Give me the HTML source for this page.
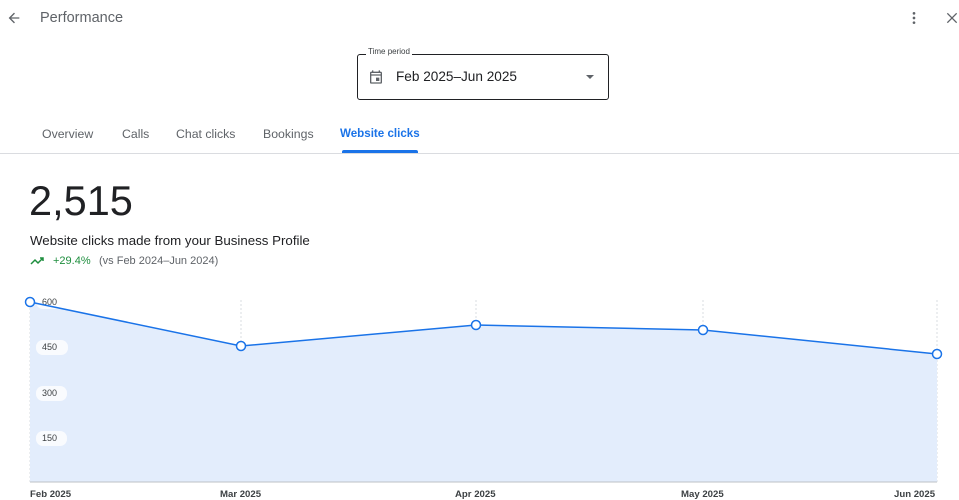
<!DOCTYPE html>
<html><head><meta charset="utf-8"><style>
body{margin:0;width:959px;height:500px;overflow:hidden;background:#fff;font-family:"Liberation Sans",sans-serif;position:relative;color:#202124}
.a{position:absolute;white-space:nowrap}
.tab{position:absolute;top:127px;font-size:12.3px;color:#5f6368}
</style></head><body>
<svg class="a" style="left:6px;top:10px" width="16" height="16" viewBox="0 0 24 24"><path d="M20 11H7.8l5.6-5.6L12 4l-8 8 8 8 1.4-1.4L7.8 13H20z" fill="#5f6368"/></svg>
<div class="a" style="left:40px;top:10px;font-size:14.5px;color:#5f6368">Performance</div>
<svg class="a" style="left:906px;top:10px" width="16" height="16" viewBox="0 0 24 24"><circle cx="12" cy="5" r="2" fill="#5f6368"/><circle cx="12" cy="12" r="2" fill="#5f6368"/><circle cx="12" cy="19" r="2" fill="#5f6368"/></svg>
<svg class="a" style="left:944px;top:10px" width="16" height="16" viewBox="0 0 24 24"><path d="M5 5L19 19M19 5L5 19" stroke="#5f6368" stroke-width="2"/></svg>
<div class="a" style="left:357px;top:54px;width:250px;height:44px;border:1.5px solid #202124;border-radius:3px"></div>
<div class="a" style="left:366px;top:47px;background:#fff;padding:0 2px;font-size:8px;color:#3c4043">Time period</div>
<svg class="a" style="left:368px;top:69px" width="16" height="16" viewBox="0 0 24 24"><path d="M19 4h-1V2h-2v2H8V2H6v2H5a2 2 0 0 0-2 2v14a2 2 0 0 0 2 2h14a2 2 0 0 0 2-2V6a2 2 0 0 0-2-2zm0 16H5V10h14zm0-12H5V6h14z M12 13h5v5h-5z" fill="#5f6368"/></svg>
<div class="a" style="left:396px;top:69px;font-size:13.6px">Feb 2025–Jun 2025</div>
<div class="a" style="left:586px;top:75px;width:0;height:0;border-left:4px solid transparent;border-right:4px solid transparent;border-top:4px solid #5f6368"></div>
<div class="tab" style="left:42px">Overview</div>
<div class="tab" style="left:122px">Calls</div>
<div class="tab" style="left:176px">Chat clicks</div>
<div class="tab" style="left:263px">Bookings</div>
<div class="tab" style="left:340px;color:#1a73e8;font-weight:bold;font-size:11.6px">Website clicks</div>
<div class="a" style="left:342px;top:150px;width:76px;height:3px;background:#1a73e8;border-radius:2px 2px 0 0"></div>
<div class="a" style="left:0;top:153px;width:959px;height:1px;background:#dadce0"></div>
<div class="a" style="left:29px;top:177px;font-size:41.5px">2,515</div>
<div class="a" style="left:30px;top:233px;font-size:13.3px">Website clicks made from your Business Profile</div>
<svg class="a" style="left:30px;top:256px" width="14" height="10" viewBox="0 0 14 10"><path d="M1 8l4-4 3 3 5-5M10 2h3v3" stroke="#1e8e3e" stroke-width="1.5" fill="none"/></svg>
<div class="a" style="left:53px;top:255px;font-size:11px;color:#1e8e3e">+29.4%</div>
<div class="a" style="left:99px;top:255px;font-size:11px;color:#5f6368">(vs Feb 2024–Jun 2024)</div>
<svg class="a" style="left:0;top:0" width="959" height="500">
<g stroke="#dadce0" stroke-dasharray="2,2"><line x1="30" y1="300" x2="30" y2="482"/><line x1="241" y1="300" x2="241" y2="482"/><line x1="476" y1="300" x2="476" y2="482"/><line x1="703" y1="300" x2="703" y2="482"/><line x1="937" y1="300" x2="937" y2="482"/></g>
<path d="M30 302L241 346L476 325L703 330L937 354L937 482L30 482Z" fill="#e3edfc"/>
<line x1="30" y1="482" x2="937" y2="482" stroke="#bdc1c6"/>
<g fill="#fff" opacity=".8"><rect x="36" y="295" width="30" height="14" rx="7"/><rect x="36" y="340" width="32" height="15" rx="7"/><rect x="36" y="386" width="31" height="15" rx="7"/><rect x="36" y="431" width="31" height="15" rx="7"/></g>
<g font-size="9" fill="#3c4043" font-family="Liberation Sans"><text x="42" y="305">600</text><text x="42" y="350">450</text><text x="42" y="396">300</text><text x="42" y="441">150</text></g>
<g font-size="9.6" fill="#3c4043" font-family="Liberation Sans" font-weight="bold"><text x="30" y="497">Feb 2025</text><text x="220" y="497">Mar 2025</text><text x="455" y="497">Apr 2025</text><text x="681" y="497">May 2025</text><text x="894" y="497">Jun 2025</text></g>
<polyline points="30,302 241,346 476,325 703,330 937,354" fill="none" stroke="#1a73e8" stroke-width="1.5"/>
<g fill="#fff" stroke="#1a73e8" stroke-width="1.5"><circle cx="30" cy="302" r="4.5"/><circle cx="241" cy="346" r="4.5"/><circle cx="476" cy="325" r="4.5"/><circle cx="703" cy="330" r="4.5"/><circle cx="937" cy="354" r="4.5"/></g>
</svg>
</body></html>
